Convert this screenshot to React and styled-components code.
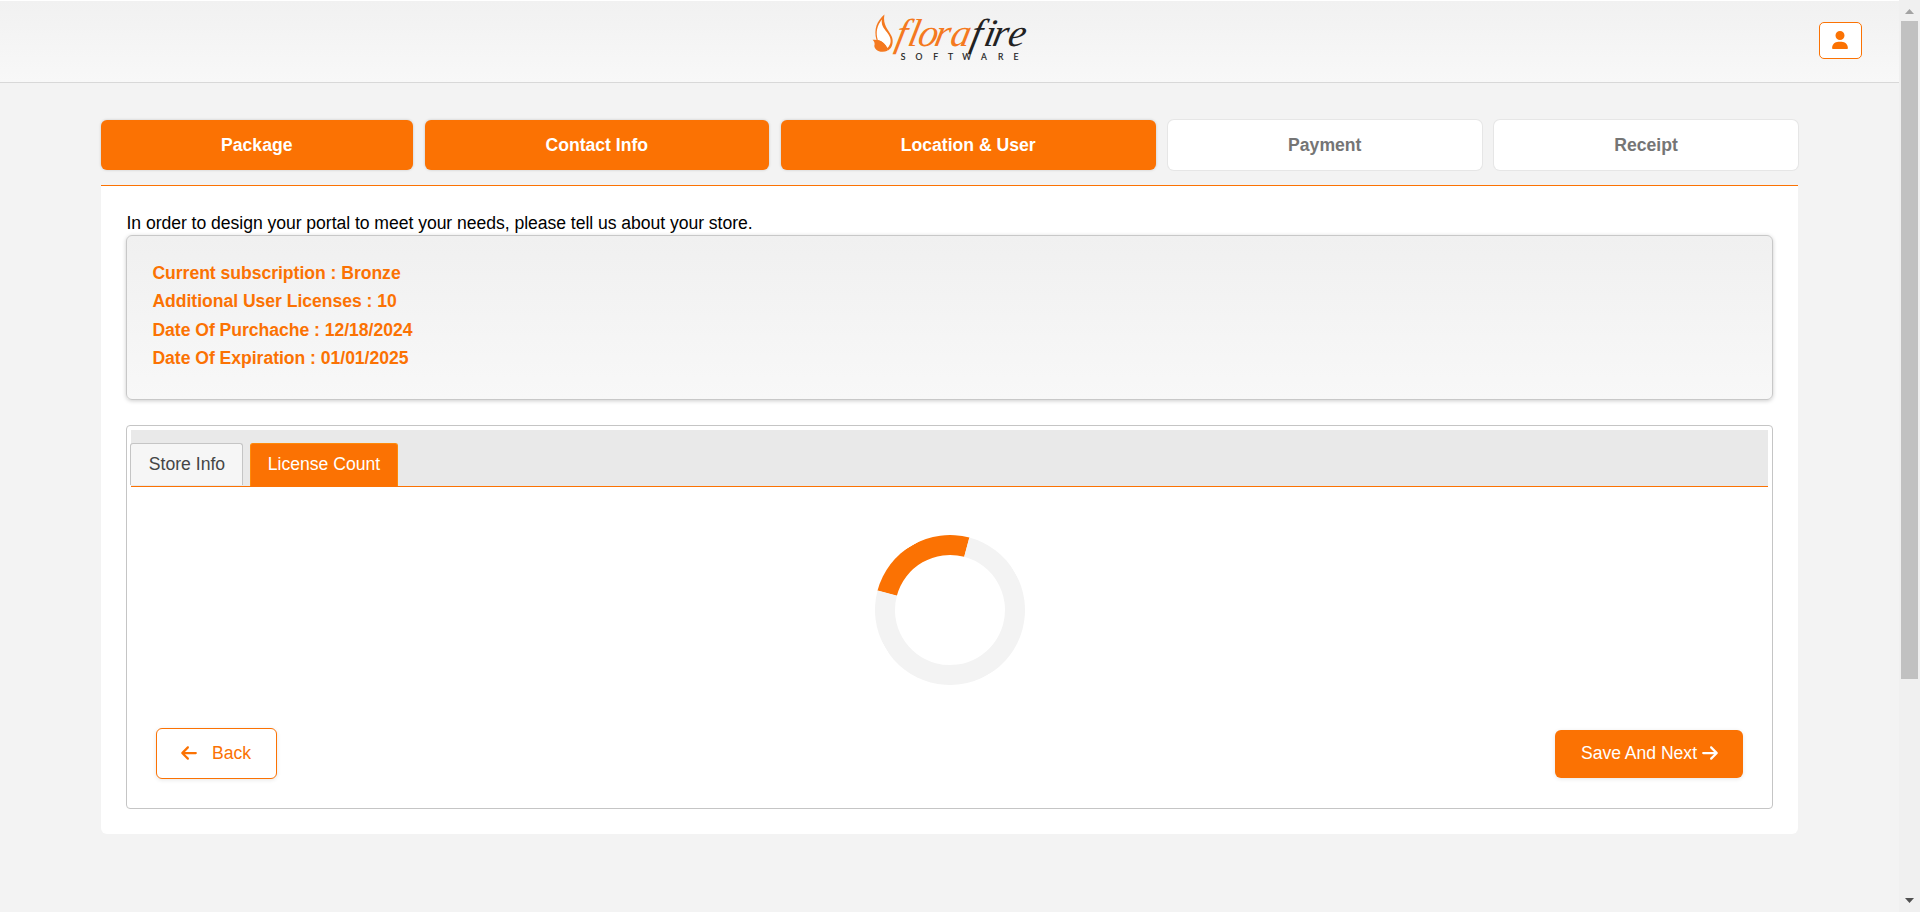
import React from "react";
import styled, { createGlobalStyle } from "styled-components";
import { FaUser, FaArrowLeft, FaArrowRight } from "react-icons/fa6";

const orange = "#fb7203";

const GlobalStyle = createGlobalStyle`
  *, *::before, *::after { box-sizing: border-box; }
  html, body { margin: 0; height: 100%; overflow: hidden; }
  body {
    background: #f3f3f3;
    color: #000;
    font-family: "Liberation Sans", Arial, sans-serif;
    font-size: 17.6px;
  }
  button { font: inherit; margin: 0; cursor: pointer; }
`;

const Window = styled.div`
  display: flex;
  height: 912px;
  overflow: hidden;
`;

const Page = styled.div`
  width: 1899px;
  flex: none;
`;

const Header = styled.header`
  display: grid;
  grid-template-columns: 1fr auto 1fr;
  height: 83px;
  border-top: 1px solid #fff;
  border-bottom: 1px solid #d8d8d8;
  background: linear-gradient(#f1f1f1, #f8f8f8);
`;

const LogoArt = styled.svg`
  grid-column: 2;
  display: block;
  width: 164px;
  height: 60px;
  margin-top: 7px;
`;

const UserButton = styled.button`
  display: flex;
  align-items: center;
  justify-content: center;
  justify-self: end;
  width: 43px;
  height: 37px;
  margin: 21px 37px 0 0;
  padding: 0 1px 1px 0;
  border: 1px solid ${orange};
  border-radius: 5px;
  background: #fff;
  color: ${orange};
  font-size: 18px;
`;

const Content = styled.main`
  width: 1697px;
  margin: 37px 0 0 101px;
`;

const Steps = styled.nav`
  display: grid;
  grid-template-columns: 311.5px 343.5px 374.5px 313.5px 304px;
  column-gap: 12.5px;
  height: 50px;
  margin-bottom: 15px;
`;

const Step = styled.button`
  border: 0;
  border-radius: 6px;
  padding: 0;
  background: ${(p) => (p.$done ? orange : "#fff")};
  color: ${(p) => (p.$done ? "#fff" : "#757575")};
  font-weight: 700;
  box-shadow: ${(p) => (p.$done ? "0 0 3px rgba(0,0,0,.18)" : "0 0 0 1px #e6e6e6")};
`;

const Card = styled.section`
  height: 649px;
  padding: 27px 25px 25px;
  border-top: 1px solid ${orange};
  border-radius: 0 0 6px 6px;
  background: #fff;
`;

const Intro = styled.p`
  margin: 0;
  height: 22px;
  line-height: 20px;
  letter-spacing: -0.045px;
  text-indent: 0.5px;
`;

const Summary = styled.div`
  height: 165px;
  padding: 23px 25px;
  border: 1px solid #c8c8c8;
  border-radius: 6px;
  background: linear-gradient(#f0f0f0, #f8f8f8);
  box-shadow: 0 1px 4px rgba(0, 0, 0, 0.2);
  color: ${orange};
  font-weight: 700;
  line-height: 28.3px;
  letter-spacing: -0.035px;
  text-indent: 0.4px;
`;

const TabPanel = styled.div`
  height: 384px;
  margin-top: 25px;
  padding: 4px;
  border: 1px solid #c5c5c5;
  border-radius: 4px;
`;

const TabBar = styled.div`
  display: flex;
  align-items: flex-end;
  gap: 7px;
  height: 57px;
  border-bottom: 1px solid ${orange};
  background: #e9e9e9;
`;

const Tab = styled.button`
  width: ${(p) => p.$width}px;
  height: ${(p) => (p.$active ? 43 : 42)}px;
  margin-left: ${(p) => (p.$active ? 0 : -1)}px;
  margin-bottom: ${(p) => (p.$active ? 0 : 1)}px;
  padding: 0 0 ${(p) => (p.$active ? 2 : 1)}px ${(p) => (p.$active ? 0 : 1)}px;
  border: 1px solid ${(p) => (p.$active ? "#ff8a0a" : "#c5c5c5")};
  border-bottom: 0;
  border-radius: 3px 3px 0 0;
  background: ${(p) => (p.$active ? orange : "#f6f6f6")};
  color: ${(p) => (p.$active ? "#fff" : "#454545")};
`;

const Spinner = styled.div`
  width: 150px;
  height: 150px;
  margin: 48px auto 43px;
  border: 20px solid #f3f3f3;
  border-top-color: ${orange};
  border-radius: 50%;
  transform: rotate(-30deg);
`;

const Actions = styled.div`
  display: flex;
  align-items: center;
  justify-content: space-between;
  padding: 0 25px;
`;

const ActionButton = styled.button`
  display: flex;
  align-items: center;
  justify-content: center;
  gap: ${(p) => (p.$primary ? 4 : 14)}px;
  width: ${(p) => (p.$primary ? 188 : 121)}px;
  height: ${(p) => (p.$primary ? 48 : 51)}px;
  padding: ${(p) => (p.$primary ? "0 0 1px 2px" : "0 2px 1px 0")};
  border: ${(p) => (p.$primary ? "0" : `1px solid ${orange}`)};
  border-radius: 6px;
  background: ${(p) => (p.$primary ? orange : "#fff")};
  color: ${(p) => (p.$primary ? "#fff" : orange)};
  box-shadow: 0 1px 4px rgba(0, 0, 0, 0.1);
  letter-spacing: -0.03px;

  svg { font-size: 18px; }
`;

const ScrollTrack = styled.div`
  display: flex;
  flex-direction: column;
  align-items: center;
  width: 21px;
  background: #f0f0f0;
`;

const ScrollThumb = styled.div`
  width: 17px;
  height: 658px;
  margin-bottom: auto;
  background: #c1c1c1;
`;

const ScrollArrow = styled.svg`
  display: block;
  width: 17px;
  height: 21px;
  fill: ${(p) => p.$fill};
`;

function Logo() {
  return (
    <LogoArt viewBox="868 8 164 60" role="img" aria-label="Florafire Software">
      <path
        d="M884.4 14.5C877 21 873.5 29 876.5 40L888 50.5C892.5 48 894 41 891.5 36C888.5 30 882.5 25 884.4 14.5Z"
        fill="#f47920"
      />
      <path
        d="M881.8 19.5C877 26 875.5 32 877.8 40C882 41 885.5 44 887.5 48C891.5 44 891.5 39 888.5 34.5C885 29 881 27 881.8 19.5Z"
        fill="#fff"
      />
      <path d="M872.6 39.8C880 39 886 42.5 887.6 50.8C880 54 872.8 49 874.6 44.5C874.8 42.6 873.8 41 872.6 39.8Z" fill="#f47920" />
      <g
        fontFamily="'Liberation Serif', serif"
        fontStyle="italic"
        fontSize="39"
        transform="translate(0 46.3) skewX(-12)"
      >
        <text x="894 906.5 916.5 933 949" y="0" fill="#f47920">flora</text>
        <text x="969 982.5 991 1006.5" y="0" fill="#222">fire</text>
      </g>
      <text
        x="900.7 915.4 933.3 948 962.2 981 998 1013.4"
        y="60.4"
        fontFamily="Lato, sans-serif"
        fontSize="8.6"
        fill="#222"
        stroke="#222"
        strokeWidth="0.2"
      >
        SOFTWARE
      </text>
    </LogoArt>
  );
}

const steps = [
  ["Package", true],
  ["Contact Info", true],
  ["Location & User", true],
  ["Payment", false],
  ["Receipt", false],
];

const details = [
  ["Current subscription", "Bronze"],
  ["Additional User Licenses", "10"],
  ["Date Of Purchache", "12/18/2024"],
  ["Date Of Expiration", "01/01/2025"],
];

export default function App() {
  return (
    <Window>
      <GlobalStyle />
      <Page>
        <Header>
          <Logo />
          <UserButton aria-label="Account"><FaUser /></UserButton>
        </Header>
        <Content>
          <Steps>
            {steps.map(([label, done]) => (
              <Step key={label} $done={done}>{label}</Step>
            ))}
          </Steps>
          <Card>
            <Intro>In order to design your portal to meet your needs, please tell us about your store.</Intro>
            <Summary>
              {details.map(([label, value]) => (
                <div key={label}>{`${label} : ${value}`}</div>
              ))}
            </Summary>
            <TabPanel>
              <TabBar>
                <Tab $width={113}>Store Info</Tab>
                <Tab $width={148} $active>License Count</Tab>
              </TabBar>
              <Spinner />
              <Actions>
                <ActionButton><FaArrowLeft />Back</ActionButton>
                <ActionButton $primary>Save And Next<FaArrowRight /></ActionButton>
              </Actions>
            </TabPanel>
          </Card>
        </Content>
      </Page>
      <ScrollTrack>
        <ScrollArrow viewBox="0 0 17 21" $fill="#a3a3a3"><path d="M4 14L8.5 9L13 14Z" /></ScrollArrow>
        <ScrollThumb />
        <ScrollArrow viewBox="0 0 17 21" $fill="#505050"><path d="M4 7L8.5 12L13 7Z" /></ScrollArrow>
      </ScrollTrack>
    </Window>
  );
}
